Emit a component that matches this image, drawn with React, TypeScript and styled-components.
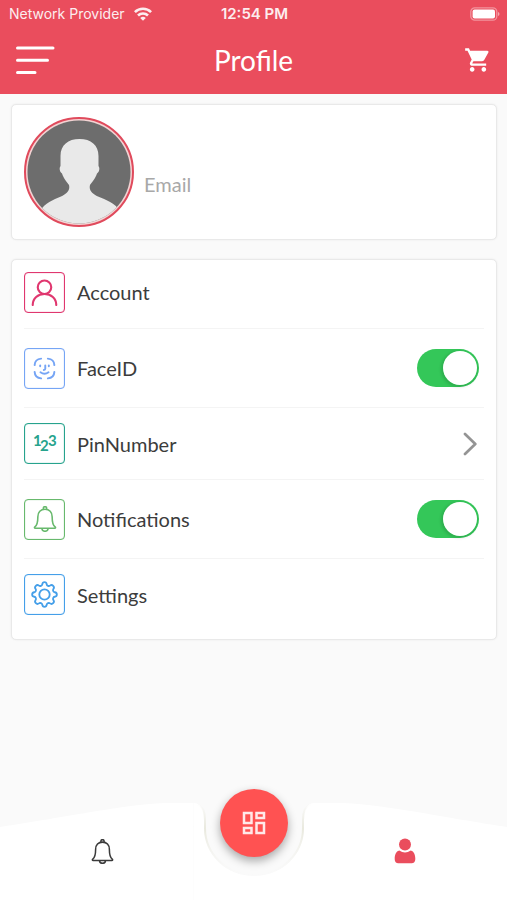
import React, { useState } from "react";
import styled, { createGlobalStyle, css } from "styled-components";
import { MdOutlineDashboard, MdShoppingCart } from "react-icons/md";

const GlobalStyle = createGlobalStyle`
  *, *::before, *::after { box-sizing: border-box; }
  body {
    margin: 0;
    background: #fafafa;
    color: #3c3c3c;
    font-family: Lato, "Open Sans", sans-serif;
  }
  button { font: inherit; color: inherit; background: none; border: 0; padding: 0; cursor: pointer; }
  svg { display: block; }
`;

const Page = styled.div`
  display: flex;
  flex-direction: column;
  min-height: 100vh;
`;

const Header = styled.header`
  background: #ea4d5d;
  color: #fff;
`;

const StatusBar = styled.div`
  display: grid;
  grid-template-columns: 1fr auto 1fr;
  align-items: center;
  height: 28px;
  padding: 0 7px 1px 9px;
  font-family: Inter, sans-serif;
  font-size: 15px;
`;

const Carrier = styled.span`
  display: flex;
  align-items: center;
  gap: 9px;
  font-size: 14px;
  opacity: 0.9;
`;

const Clock = styled.span`
  font-weight: 600;
  opacity: 0.9;
`;

const Battery = styled.span`
  justify-self: end;
`;

const TitleBar = styled.div`
  display: grid;
  grid-template-columns: 1fr auto 1fr;
  align-items: center;
  height: 66px;
  padding: 0 15px 2px 15px;
`;

const Title = styled.h1`
  margin: 0;
  font-size: 28px;
  font-weight: 400;
  line-height: 32px;
`;

const MenuButton = styled.button`
  justify-self: start;
`;

const CartButton = styled.button`
  justify-self: end;
`;

const Content = styled.main`
  display: flex;
  flex-direction: column;
  gap: 19px;
  padding: 10px 10px 24px 11px;
`;

const card = css`
  background: #fff;
  border: 1px solid #e9e9e9;
  border-radius: 5px;
  box-shadow: 0 0 2px #e9e9e9;
`;

const ProfileCard = styled.section`
  ${card}
  display: flex;
  align-items: center;
  gap: 10px;
  padding: 12px;
`;

const Avatar = styled.div`
  width: 110px;
  height: 110px;
  padding: 1px;
  border: 2px solid #e04a5c;
  border-radius: 50%;
  background: #f3d3d3;
`;

const Email = styled.span`
  padding-top: 24px;
  color: #a8a8a8;
  font-size: 20px;
  line-height: 24px;
`;

const OptionList = styled.ul`
  ${card}
  margin: 0;
  padding: 0 12px 9px;
  list-style: none;
`;

const Item = styled.li`
  & + & { border-top: 1px solid #f4f4f4; }
  &:first-child { padding-bottom: 4px; }
`;

const rowLayout = css`
  display: flex;
  align-items: center;
  gap: 12px;
  width: 100%;
  font-size: 20px;
  line-height: 24px;
  text-align: left;
`;

const ItemButton = styled.button<{ $height: number }>`
  ${rowLayout}
  height: ${(p) => p.$height}px;
  padding-right: 7px;
`;

const ItemLabel = styled.label`
  ${rowLayout}
  height: 78px;
  padding-right: 5px;
`;

const ItemText = styled.span`
  flex: 1;
`;

const IconTile = styled.span<{ $color: string }>`
  display: grid;
  place-items: center;
  width: 41px;
  height: 41px;
  border: 1px solid ${(p) => p.$color};
  border-radius: 4px;
  box-shadow: inset 0 0 1px ${(p) => p.$color};
  color: ${(p) => p.$color};
`;

const Switch = styled.input`
  appearance: none;
  display: flex;
  align-items: center;
  width: 62px;
  height: 38px;
  margin: 0;
  padding: 0 1px;
  border-radius: 19px;
  background: #d8d8d8;
  cursor: pointer;
  &::before {
    content: "";
    width: 36px;
    height: 36px;
    border: 1px solid #ffffff00;
    border-radius: 50%;
    background: #fff;
    background-clip: padding-box;
    box-shadow: -1px 1px 3px #0002;
  }
  &:checked { background: #34c759; justify-content: flex-end; }
`;

const Footer = styled.footer`
  position: relative;
  display: grid;
  height: 100px;
  margin-top: auto;
`;

const Shape = styled.div`
  grid-area: 1 / 1;
  display: flex;
  min-width: 0;
`;

const Slope = styled.svg`
  flex: 1;
  min-width: 0;
  width: 0;
  height: 100px;
`;

const Tabs = styled.nav`
  grid-area: 1 / 1;
  display: flex;
  justify-content: space-between;
  align-items: center;
  padding: 2px 17% 0;
  z-index: 1;
`;

const Tab = styled.button<{ $active?: boolean }>`
  display: grid;
  place-items: center;
  width: 32px;
  height: 32px;
  color: ${(p) => (p.$active ? "#ea4d5d" : "#3a3a3a")};
`;

const Fab = styled.button`
  position: absolute;
  z-index: 2;
  top: -11px;
  left: 50%;
  display: grid;
  place-items: center;
  width: 68px;
  height: 68px;
  margin-left: -34px;
  border-radius: 50%;
  background: #ff5252;
  color: #ffe9e9;
  box-shadow: 0 4px 10px #0005;
`;

const WifiIcon = () => (
  <svg width="18" height="14" viewBox="0 0 18 14" fill="none" stroke="#fff" strokeWidth="2.6" aria-hidden="true">
    <path d="M.9 5.1a11.5 11.5 0 0 1 16.2 0" />
    <path d="M4 8.5a7.1 7.1 0 0 1 10 0" />
    <path d="M9 13.8 6.2 11a4 4 0 0 1 5.6 0Z" fill="#fff" stroke="none" />
  </svg>
);

const BatteryIcon = () => (
  <svg width="30" height="14" viewBox="0 0 30 14" aria-hidden="true">
    <rect x=".8" y=".8" width="26" height="12.4" rx="4" fill="none" stroke="#fff" strokeOpacity=".4" strokeWidth="1.3" />
    <rect x="2.6" y="2.6" width="22.4" height="8.8" rx="2" fill="#fff" />
    <path d="M28 5v4q1.5-.6 1.5-2T28 5Z" fill="#fff" fillOpacity=".5" />
  </svg>
);

const MenuIcon = () => (
  <svg width="40" height="30" viewBox="0 0 40 30" stroke="#fff" strokeWidth="3" strokeLinecap="round" aria-hidden="true">
    <path d="M2.5 3H38M2.5 15.2H32.5M2.5 27.5H20" />
  </svg>
);

const Silhouette = () => (
  <svg width="104" height="104" viewBox="0 0 104 104" role="img" aria-label="Profile picture">
    <defs>
      <clipPath id="avatar"><circle cx="52" cy="52" r="51.5" /></clipPath>
    </defs>
    <g clipPath="url(#avatar)">
      <rect width="104" height="104" fill="#6d6d6d" />
      <path
        fill="#e9e9e9"
        d="M52.500 19C41 19 33.500 25 33.500 36v10c-1.500 2-1 6 1.500 7.500C37 59 39 61 42 65c1.500 6-3 9-8 11.500C26 80 18 83 13 91v17h80V91c-5-8-14-11-22-14.500C66 74 61.500 71 63 65c3-4 5-6 7-11.500 2.500-1.500 3-5.500 1.500-7.500V36C71.500 25 64 19 52.500 19Z"
      />
    </g>
  </svg>
);

const AccountIcon = () => (
  <svg width="27" height="27" viewBox="0 0 28 28" fill="none" stroke="currentColor" strokeWidth="2.200" strokeLinecap="round">
    <circle cx="14" cy="8.500" r="7" />
    <path d="M1.800 27v-.3C1.800 20 7.200 15.500 14 15.500s12.200 4.500 12.200 11.200v.3" />
  </svg>
);

const FaceIcon = () => (
  <svg width="23" height="23" viewBox="0 0 24 24" fill="none" stroke="currentColor" strokeWidth="2" strokeLinecap="round" strokeLinejoin="round">
    <path d="M1.700 8.500Q2 2.200 8.500 1.700M15.500 1.700Q22 2.200 22.300 8.500M22.300 15.500Q22 21.800 15.500 22.300M8.500 22.300Q2 21.800 1.700 15.500" />
    <path d="M7.500 8.700v.9M16.500 8.700v.9M12.800 8.700v3.600q0 1.200-1.500 1.200M7.800 16q4.200 2.900 8.400 0" />
  </svg>
);

const DigitsIcon = () => (
  <svg width="27" height="25" viewBox="0 0 27 25" fill="currentColor" fontFamily="Lato, sans-serif" fontSize="15" fontWeight="700">
    <text x="2" y="15">1</text>
    <text x="9" y="20">2</text>
    <text x="17" y="15">3</text>
  </svg>
);

const BellIcon = ({ size }: { size: number }) => (
  <svg width={size} height={size} viewBox="0 0 28 28" fill="none" stroke="currentColor" strokeWidth="1.700" strokeLinejoin="round">
    <path d="M12.200 3.700V2.500a1.800 1.800 0 0 1 3.600 0v1.200" />
    <path d="M14 3.500c-4.700 0-7.700 3.200-7.700 8 0 6.500-.6 9.200-3.200 11-.8.700-.5 1.500.4 1.500h21c.9 0 1.200-.8.400-1.500-2.600-1.800-3.200-4.500-3.200-11 0-4.800-3-8-7.700-8Z" />
    <path d="M10.700 24c0 2 1.400 3.200 3.300 3.200s3.300-1.200 3.300-3.200" />
  </svg>
);

const GearIcon = () => (
  <svg width="27" height="27" viewBox="0 0 28 28" fill="none" stroke="currentColor" strokeWidth="1.900" strokeLinejoin="round">
    <circle cx="14" cy="14" r="5.400" />
    <path d="M11.700 3.400c.2-1.600.6-2.200 2.300-2.200s2.100.6 2.300 2.200c.2 1.500 2.200 2.300 3.400 1.400 1.300-1 2-1.100 3.300.2s1.200 2 .2 3.300c-.9 1.200-.1 3.200 1.400 3.400 1.600.2 2.200.6 2.200 2.300s-.6 2.100-2.200 2.300c-1.500.2-2.300 2.200-1.400 3.400 1 1.300 1.100 2-.2 3.300s-2 1.200-3.300.2c-1.200-.9-3.200-.1-3.400 1.400-.2 1.600-.6 2.200-2.300 2.200s-2.100-.6-2.300-2.200c-.2-1.500-2.200-2.300-3.400-1.400-1.300 1-2 1.100-3.300-.2s-1.200-2-.2-3.300c.9-1.200.1-3.200-1.400-3.400-1.600-.2-2.200-.6-2.200-2.300s.6-2.100 2.200-2.300c1.500-.2 2.300-2.200 1.400-3.400-1-1.300-1.100-2 .2-3.300s2-1.200 3.300-.2c1.200.9 3.200.1 3.400-1.400Z" />
  </svg>
);

const ChevronIcon = () => (
  <svg width="14" height="24" viewBox="0 0 14 24" fill="none" stroke="#949494" strokeWidth="2.700" strokeLinecap="round" strokeLinejoin="round">
    <path d="M2 2l10.300 10L2 22" />
  </svg>
);

const UserIcon = () => (
  <svg width="22" height="26" viewBox="0 0 22 26" fill="currentColor">
    <circle cx="11" cy="6.500" r="6" />
    <path d="M5.200 12.500Q11 16.500 16.800 12.500C20 13.300 21.300 17 21.300 20.500 21.300 24 20 25.200 17 25.200H5C2 25.200.7 24 .7 20.500.7 17 2 13.300 5.200 12.500Z" />
  </svg>
);

const Notch = () => (
  <svg width="120" height="100" viewBox="0 0 120 100" aria-hidden="true">
    <defs>
      <linearGradient id="rim" x1="0" y1="0" x2="0" y2="1">
        <stop offset="0" stopColor="#e9e9de" stopOpacity="0" />
        <stop offset=".35" stopColor="#e9e9de" />
        <stop offset="1" stopColor="#f5f5f2" stopOpacity="0" />
      </linearGradient>
    </defs>
    <path fill="#fff" d="M0 3C8 4 10 10 10 20v8C10 55 32 76 60 76s50-21 50-48v-8c0-10 2-16 10-17v97H0Z" />
    <path fill="none" stroke="url(#rim)" strokeWidth="2" d="M3 4C9 6 11 12 11 20v8C11 54 33 75 60 75s49-21 49-47v-8c0-8 2-14 8-16" />
  </svg>
);

type SwitchRowProps = { label: string; color: string; icon: React.ReactNode };

const SwitchRow = ({ label, color, icon }: SwitchRowProps) => {
  const [on, setOn] = useState(true);
  return (
    <Item>
      <ItemLabel>
        <IconTile $color={color}>{icon}</IconTile>
        <ItemText>{label}</ItemText>
        <Switch type="checkbox" role="switch" checked={on} onChange={() => setOn(!on)} />
      </ItemLabel>
    </Item>
  );
};

type LinkRowProps = SwitchRowProps & { height?: number; chevron?: boolean };

const LinkRow = ({ label, color, icon, height = 71, chevron }: LinkRowProps) => (
  <Item>
    <ItemButton type="button" $height={height}>
      <IconTile $color={color}>{icon}</IconTile>
      <ItemText>{label}</ItemText>
      {chevron && <ChevronIcon />}
    </ItemButton>
  </Item>
);

export default function App() {
  return (
    <Page>
      <GlobalStyle />
      <Header>
        <StatusBar>
          <Carrier>Network Provider <WifiIcon /></Carrier>
          <Clock>12:54 PM</Clock>
          <Battery><BatteryIcon /></Battery>
        </StatusBar>
        <TitleBar>
          <MenuButton type="button" aria-label="Menu"><MenuIcon /></MenuButton>
          <Title>Profile</Title>
          <CartButton type="button" aria-label="Cart"><MdShoppingCart size={28} /></CartButton>
        </TitleBar>
      </Header>
      <Content>
        <ProfileCard>
          <Avatar><Silhouette /></Avatar>
          <Email>Email</Email>
        </ProfileCard>
        <OptionList>
          <LinkRow label="Account" color="#e0376f" icon={<AccountIcon />} height={64} />
          <SwitchRow label="FaceID" color="#76a5f5" icon={<FaceIcon />} />
          <LinkRow label="PinNumber" color="#27a38d" icon={<DigitsIcon />} chevron />
          <SwitchRow label="Notifications" color="#68b96d" icon={<BellIcon size={26} />} />
          <LinkRow label="Settings" color="#459fe9" icon={<GearIcon />} />
        </OptionList>
      </Content>
      <Footer>
        <Shape>
          <Slope viewBox="0 0 194 100" preserveAspectRatio="none" aria-hidden="true">
            <path fill="#fff" d="M0 27C50 20 120 5 165 3h29v97H0Z" />
          </Slope>
          <Notch />
          <Slope viewBox="0 0 194 100" preserveAspectRatio="none" aria-hidden="true">
            <path fill="#fff" d="M194 27C144 20 74 5 29 3H0v97h194Z" />
          </Slope>
        </Shape>
        <Tabs>
          <Tab type="button" aria-label="Notifications"><BellIcon size={25} /></Tab>
          <Tab type="button" aria-label="Profile" $active><UserIcon /></Tab>
        </Tabs>
        <Fab type="button" aria-label="Dashboard"><MdOutlineDashboard size={30} /></Fab>
      </Footer>
    </Page>
  );
}
